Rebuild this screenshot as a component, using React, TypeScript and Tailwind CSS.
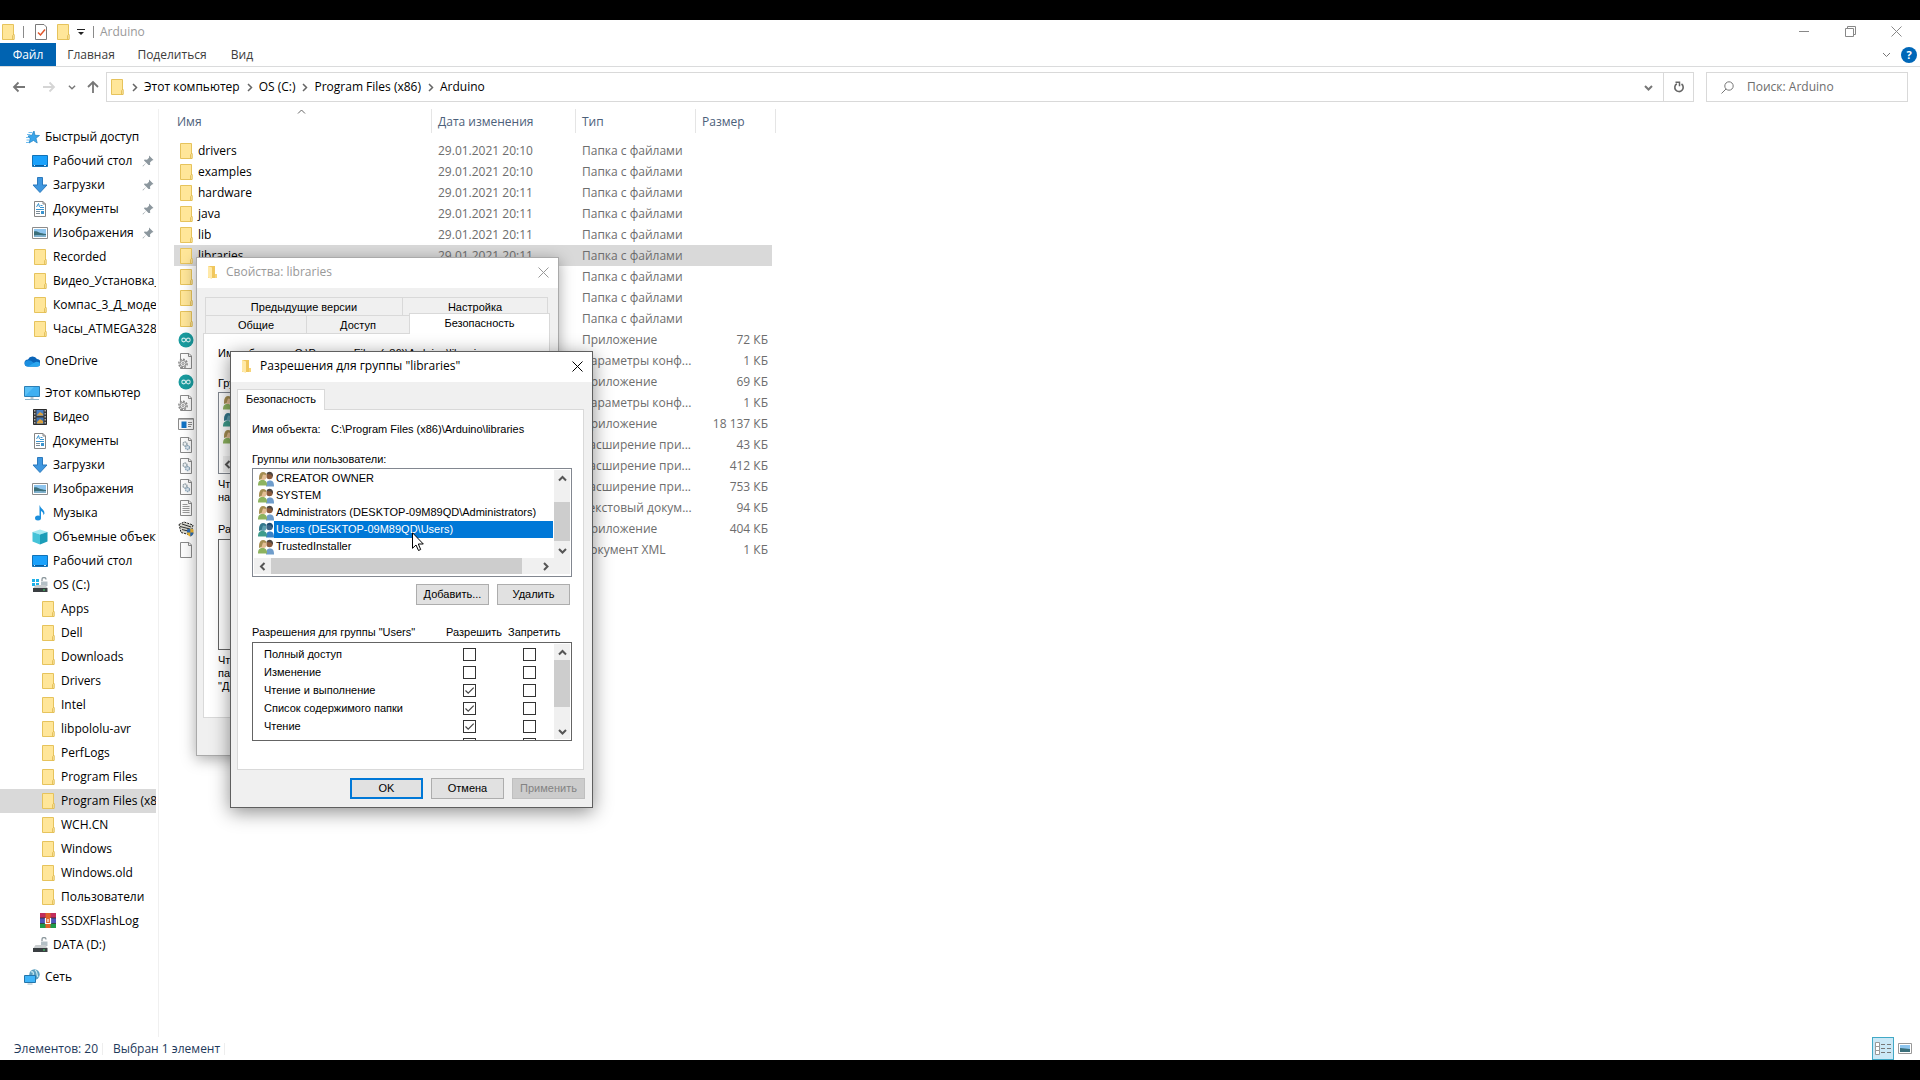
import { useState, type ReactNode } from "react";
import clsx from "clsx";

type IconProps = { className?: string };

const Svg = ({ className, children }: IconProps & { children: ReactNode }) => (
  <svg viewBox="0 0 16 16" className={clsx("size-4 shrink-0", className)} fill="none" aria-hidden="true">
    {children}
  </svg>
);

const FolderIcon = ({ className }: IconProps) => (
  <Svg className={className}>
    <path d="M2.500.5h11v10.500h.5v4.500H2.500z" fill="#ffe699" stroke="#e6c35c" />
    <path d="M12.500 15.500v-4l1.500-1.500v5.500z" fill="#ffefb8" stroke="#e0b94a" strokeWidth=".8" />
  </Svg>
);

const SmallFolderIcon = () => (
  <Svg>
    <path d="M3 2h7v12H3z" fill="#f0c75e" />
    <path d="M3 2l4 1.500V15L3 13.500z" fill="#ffe9a8" />
    <path d="M10 10h2v4h-2z" fill="#f7d57a" />
  </Svg>
);

const StarIcon = () => (
  <Svg>
    <path d="M10 2l1 4.300 4.500.2-3.500 2.700 1.200 4.800L9.500 11.500 5 14l1.200-4.300L4 7l3.800-.7z" fill="#3aa5ea" stroke="#1c7fc0" strokeWidth=".7" />
    <path d="M4.500 3.500h4M3 5.500h3.500M2 8.500h3M2.500 11h3M2 13.500h3" stroke="#6fbdf0" />
  </Svg>
);

const DesktopIcon = () => (
  <Svg>
    <path d="M.5 2.500h15v11H.5z" fill="#1aa1fb" stroke="#1173b8" />
    <path d="M1 12.500h14" stroke="#0a5c9e" />
    <path d="M2 12.500h1M12 12.500h2" stroke="#c8e8ff" />
  </Svg>
);

const DownloadIcon = () => (
  <Svg>
    <path d="M5.500.5h5v7.500h4.500L8 15.500 1 8h4.500z" fill="#3f97df" stroke="#2b79bd" />
  </Svg>
);

const DocumentIcon = () => (
  <Svg>
    <path d="M2.500.5h8.500l2.500 2.500v12.500h-11z" fill="#fff" stroke="#858585" />
    <path d="M11 .5V3h2.500" stroke="#858585" />
    <path d="M4.500 6l2-3.500 1 3.500M8.500 4.500h2M8 6.500h4M4 8.500h8" stroke="#3a94cf" />
    <path d="M4 10.500h4M4 12.500h4" stroke="#7a8a96" />
    <path d="M9 10h3v3H9z" fill="#3a94cf" />
  </Svg>
);

const PictureIcon = () => (
  <Svg>
    <path d="M.5 2.500h15v11H.5z" fill="#fff" stroke="#8c8c8c" />
    <path d="M2 4h12v8H2z" fill="#8ec5ee" />
    <path d="M2 6.500c3-1 5 2 12 2.500v2H2z" fill="#3b6f7a" />
    <path d="M2 10.500c4-1 8 0 12-.5v2H2z" fill="#7fb0cc" />
  </Svg>
);

const CloudIcon = () => (
  <Svg>
    <path d="M4 13.500a3.500 3.500 0 010-7 5 5 0 019-.5 3.500 3.500 0 01-.5 7.500z" fill="#0a64b8" />
    <path d="M4 13.500a3 3 0 01-.5-6c2-.5 4 .5 5 1.500l6 3.500c-.5.700-1.200 1-2 1z" fill="#1a8ee0" />
    <path d="M4 13.500l6.500-4c2-1.300 5.500-.5 5.500 1.500a2.500 2.500 0 01-2.500 2.500z" fill="#2aa7f0" />
  </Svg>
);

const ComputerIcon = () => (
  <Svg>
    <path d="M.5 1.500h15v10H.5z" fill="#5bc1f7" stroke="#2c7fb5" />
    <path d="M1 11l9-9h5v9z" fill="#3fb0f2" />
    <path d="M6.500 12h3v2h-3z" fill="#b7c4cc" />
    <path d="M1 14.500h14" stroke="#8fb4c8" />
  </Svg>
);

const VideoIcon = () => (
  <Svg>
    <path d="M1.500.5h13v15h-13z" fill="#3b3b3b" stroke="#2a2a2a" />
    <path d="M2.800 1v14M13.200 1v14" stroke="#e0e0e0" strokeDasharray="1.500 1.500" />
    <path d="M4.500 1h7v6h-7z" fill="#4a7fc2" />
    <path d="M4.500 8.500h7V15h-7z" fill="#3f74b5" />
    <path d="M5 6l3-3 3 2v1.500H5zM5 13l3-3 3 2v2.500H5z" fill="#dba13d" />
  </Svg>
);

const MusicIcon = () => (
  <Svg>
    <path d="M8 .5c0 3 4.500 3.500 4.500 8l-1 1.500c0-2.500-1.500-3.500-2.500-4v7.500H7.500V.5z" fill="#1b8fdd" />
    <ellipse cx="6" cy="13" rx="3" ry="2.500" fill="#1b8fdd" />
  </Svg>
);

const CubeIcon = () => (
  <Svg>
    <path d="M8 .5l7.500 2.500L8 5.500.5 3z" fill="#a5eaf2" />
    <path d="M.5 3L8 5.500v10L.5 12.500z" fill="#45c3d8" />
    <path d="M15.500 3L8 5.500v10l7.500-3z" fill="#1b9db8" />
  </Svg>
);

const DriveIcon = ({ os }: { os?: boolean }) => (
  <Svg>
    {os && <path d="M0 2h3v3H0zM4 2h3v3H4zM0 6h3v3H0zM4 6h3v3H4z" fill="#1fb1e8" />}
    <path d="M10 4V2.500a2 2 0 014 0" stroke="#8d999e" strokeWidth="1.300" />
    <path d="M9 4.500h6.500V9H9z" fill="#b4c0c6" />
    <path d="M3.500 8h10l2 3H1.500z" fill="#c9cdcf" />
    <path d="M1 11h14.500v4H1z" fill="#3a3f42" />
    <path d="M11 12.500h2v1h-2z" fill="#3fe26a" />
  </Svg>
);

const RarIcon = () => (
  <Svg>
    <path d="M0 0h16v5H0z" fill="#c22d5b" />
    <path d="M0 5h16v5.500H0z" fill="#4c56b8" />
    <path d="M0 10.500h16V15H0z" fill="#1f9a4a" />
    <path d="M0 5h16M0 10.500h16" stroke="#222" strokeWidth=".7" />
    <path d="M5.500 0h5v15h-5z" fill="#e0642c" />
    <path d="M5.500 5v5.500h5V5M8 6v3" stroke="#fff" strokeWidth="1.200" />
  </Svg>
);

const NetworkIcon = () => (
  <Svg>
    <circle cx="10.500" cy="5.500" r="5.200" fill="#5a9fbf" />
    <path d="M7 3c2-1 3 1 2 3M11 1c3 2 1 4 3 7" stroke="#c4e6ee" strokeWidth="1.300" />
    <path d="M.5 6.500h11v7H.5z" fill="#3fb4f8" stroke="#2575aa" />
    <path d="M3.500 15h5" stroke="#9bb4c0" />
  </Svg>
);

const ArduinoIcon = () => (
  <Svg>
    <circle cx="8" cy="8" r="7.500" fill="#1a9c9f" />
    <circle cx="5.700" cy="8" r="1.900" stroke="#d6f0f0" strokeWidth="1.100" />
    <circle cx="10.300" cy="8" r="1.900" stroke="#d6f0f0" strokeWidth="1.100" />
  </Svg>
);

const Sheet = ({ children }: { children?: ReactNode }) => (
  <Svg>
    <path d="M2.500.5h8.500l2.500 2.500v12.500h-11z" fill="#fcfcfc" stroke="#8a8a8a" />
    <path d="M10.500.5v3h3" stroke="#8a8a8a" />
    {children}
  </Svg>
);

const IniIcon = () => (
  <Sheet>
    <circle cx="5" cy="10.500" r="4.200" fill="#f2f2f2" stroke="#8a8a8a" strokeWidth="1.400" strokeDasharray="2 1.200" />
    <circle cx="5" cy="10.500" r="3" stroke="#8a8a8a" />
    <circle cx="5" cy="10.500" r="1" fill="#fff" stroke="#8a8a8a" />
  </Sheet>
);

const DllIcon = () => (
  <Sheet>
    <circle cx="7" cy="7" r="2" fill="#eef2f4" stroke="#93a0a8" strokeWidth="1.300" strokeDasharray="1.500 .5" />
    <circle cx="9.500" cy="10.500" r="2" fill="#dfeaf2" stroke="#8fa9bd" strokeWidth="1.300" strokeDasharray="1.500 .5" />
  </Sheet>
);

const TextIcon = () => (
  <Sheet>
    <path d="M4.500 4.500h5M4.500 6.500h7M4.500 8.500h7M4.500 10.500h7M4.500 12.500h7" stroke="#9a9a9a" />
  </Sheet>
);

const ExeIcon = () => (
  <Svg>
    <path d="M.5 2.500h15v11H.5z" fill="#fafafa" stroke="#8a8a8a" />
    <path d="M1 3.500h14" stroke="#b5b5b5" />
    <path d="M3.500 5.500h5V12h-5z" fill="#1273c4" />
    <path d="M10 6.500h4M10 8.500h4M10 10.500h3" stroke="#8a8a8a" />
  </Svg>
);

const UninstallIcon = () => (
  <Svg>
    <path d="M1 3.500L6 1l9 3-2.500 10L3 11.500z" fill="#d9d9d0" stroke="#222" strokeDasharray="2 1" />
    <path d="M2 5.500l10 2.500M4 3l9 3M4 8.500l6 1.500" stroke="#333" />
    <path d="M9 8.500l3-1 3.500 1v3c0 2-1.500 3.500-3.200 4C10.500 15 9 13.500 9 11.500z" fill="#f0b72f" />
    <path d="M12.300 7.500L9 8.500v3h3.300zM12.300 11.500h3.200c0 2-1.500 3.500-3.200 4z" fill="#2c6cb8" />
  </Svg>
);

const PinIcon = () => (
  <svg viewBox="0 0 12 12" className="size-3 shrink-0" aria-hidden="true">
    <path d="M7 .5L11.500 5l-1.500.5-2 2 .2 2.500L6.500 10 4.300 7.700 1 11.500.5 11l3.800-3.300L2 5.500l.5-1 2.500.2 2-2z" fill="#8c979e" />
  </svg>
);

const UsersIcon = ({ blue }: { blue?: boolean }) => (
  <Svg>
    <path d="M8 15.500c0-4 1-6 4-6s4 2 4 6z" fill={blue ? "#3a83c6" : "#6f9dcb"} />
    <circle cx="11.500" cy="5" r="3.200" fill={blue ? "#3c6384" : "#8a5a3c"} />
    <path d="M8.500 3c1-3 6-3 6.500 1v2l-2-2.500z" fill={blue ? "#1f4c70" : "#4d4540"} />
    <path d="M0 14.500c0-4 1.500-5.500 4.500-5.500S9 10.500 9 14.500z" fill={blue ? "#3f9c8c" : "#8db35f"} />
    <circle cx="5" cy="5.500" r="3.500" fill={blue ? "#5fa0b0" : "#e3bd93"} />
    <path d="M1 9c0-2 0-8 4-8 2.500 0 3.500 1.500 3.500 3L5 3.500 3.500 8z" fill={blue ? "#34788c" : "#a58e52"} />
  </Svg>
);

type Dir = "up" | "down" | "left" | "right";

const chevrons: Record<Dir, string> = {
  up: "M1 6.500L4.500 3 8 6.500",
  down: "M1 3L4.500 6.500 8 3",
  left: "M6.500 1L3 4.500 6.500 8",
  right: "M3 1l3.500 3.500L3 8",
};

const Chevron = ({ dir, className = "size-[9px] text-[#555]", thick = 2 }: IconProps & { dir: Dir; thick?: number }) => (
  <svg viewBox="0 0 9 9" className={clsx("shrink-0", className)} fill="none" aria-hidden="true">
    <path d={chevrons[dir]} stroke="currentColor" strokeWidth={thick} />
  </svg>
);

const CloseIcon = () => (
  <svg viewBox="0 0 11 11" className="size-[11px]" fill="none" aria-hidden="true">
    <path d="M.5.5l10 10M10.500.5l-10 10" stroke="currentColor" />
  </svg>
);

type SideItem = { label: string; icon: ReactNode; level?: 1 | 2 | 3; pin?: boolean; active?: boolean };

const folder = (label: string, level: 2 | 3 = 3, active = false): SideItem => ({
  label,
  level,
  active,
  icon: <FolderIcon />,
});

const sideGroups: SideItem[][] = [
  [
    { label: "Быстрый доступ", icon: <StarIcon />, level: 1 },
    { label: "Рабочий стол", icon: <DesktopIcon />, pin: true },
    { label: "Загрузки", icon: <DownloadIcon />, pin: true },
    { label: "Документы", icon: <DocumentIcon />, pin: true },
    { label: "Изображения", icon: <PictureIcon />, pin: true },
    folder("Recorded", 2),
    folder("Видео_Установка_п", 2),
    folder("Компас_3_Д_модели", 2),
    folder("Часы_ATMEGA328_", 2),
  ],
  [{ label: "OneDrive", icon: <CloudIcon />, level: 1 }],
  [
    { label: "Этот компьютер", icon: <ComputerIcon />, level: 1 },
    { label: "Видео", icon: <VideoIcon /> },
    { label: "Документы", icon: <DocumentIcon /> },
    { label: "Загрузки", icon: <DownloadIcon /> },
    { label: "Изображения", icon: <PictureIcon /> },
    { label: "Музыка", icon: <MusicIcon /> },
    { label: "Объемные объекты", icon: <CubeIcon /> },
    { label: "Рабочий стол", icon: <DesktopIcon /> },
    { label: "OS (C:)", icon: <DriveIcon os /> },
    folder("Apps"),
    folder("Dell"),
    folder("Downloads"),
    folder("Drivers"),
    folder("Intel"),
    folder("libpololu-avr"),
    folder("PerfLogs"),
    folder("Program Files"),
    folder("Program Files (x86)", 3, true),
    folder("WCH.CN"),
    folder("Windows"),
    folder("Windows.old"),
    folder("Пользователи"),
    { label: "SSDXFlashLog", icon: <RarIcon />, level: 3 },
    { label: "DATA (D:)", icon: <DriveIcon /> },
  ],
  [{ label: "Сеть", icon: <NetworkIcon />, level: 1 }],
];

const Sidebar = () => (
  <nav className="flex w-[159px] shrink-0 flex-col gap-2 border-r border-[#f0f0f0] pt-4 pr-0.5">
    {sideGroups.map((group, i) => (
      <ul key={i}>
        {group.map(({ label, icon, level = 2, pin, active }) => (
          <li key={label}>
            <a
              href="#"
              className={clsx(
                "flex h-6 items-center gap-[5px] overflow-hidden whitespace-nowrap",
                level === 1 && "pl-6",
                level === 2 && "pl-8",
                level === 3 && "pl-10",
                active && "bg-[#d9d9d9]"
              )}
            >
              {icon}
              <span className="flex-1">{label}</span>
              {pin && (
                <span className="pr-0.5">
                  <PinIcon />
                </span>
              )}
            </a>
          </li>
        ))}
      </ul>
    ))}
  </nav>
);

type FileRow = { name?: string; date?: string; type: string; size?: string; icon: ReactNode };

const dir = (name?: string, date?: string): FileRow => ({
  name,
  date,
  type: "Папка с файлами",
  icon: <FolderIcon />,
});

const files: FileRow[] = [
  dir("drivers", "29.01.2021 20:10"),
  dir("examples", "29.01.2021 20:10"),
  dir("hardware", "29.01.2021 20:11"),
  dir("java", "29.01.2021 20:11"),
  dir("lib", "29.01.2021 20:11"),
  dir("libraries", "29.01.2021 20:11"),
  dir(),
  dir(),
  dir(),
  { type: "Приложение", size: "72 КБ", icon: <ArduinoIcon /> },
  { type: "Параметры конф...", size: "1 КБ", icon: <IniIcon /> },
  { type: "Приложение", size: "69 КБ", icon: <ArduinoIcon /> },
  { type: "Параметры конф...", size: "1 КБ", icon: <IniIcon /> },
  { type: "Приложение", size: "18 137 КБ", icon: <ExeIcon /> },
  { type: "Расширение при...", size: "43 КБ", icon: <DllIcon /> },
  { type: "Расширение при...", size: "412 КБ", icon: <DllIcon /> },
  { type: "Расширение при...", size: "753 КБ", icon: <DllIcon /> },
  { type: "Текстовый докум...", size: "94 КБ", icon: <TextIcon /> },
  { type: "Приложение", size: "404 КБ", icon: <UninstallIcon /> },
  { type: "Документ XML", size: "1 КБ", icon: <Sheet /> },
];

const headCell = "flex h-6 items-center border-r border-[#e5e5e5] pt-0.5";

const FileTable = () => (
  <div className="flex-1 pl-[15px]">
    <table className="w-[598px] table-fixed border-collapse whitespace-nowrap">
      <thead>
        <tr className="h-[31px] text-left align-top text-[#4c607a]">
          <th className="w-[258px] p-0 font-normal">
            <div className={clsx(headCell, "relative pl-[3px]")}>
              Имя
              <Chevron dir="up" thick={1} className="absolute -top-0.5 left-[123px] size-[9px] text-[#666]" />
            </div>
          </th>
          <th className="w-36 p-0 font-normal">
            <div className={clsx(headCell, "pl-1.5")}>Дата изменения</div>
          </th>
          <th className="w-[120px] p-0 font-normal">
            <div className={clsx(headCell, "pl-1.5")}>Тип</div>
          </th>
          <th className="p-0 font-normal">
            <div className={clsx(headCell, "w-20 pl-1.5")}>Размер</div>
          </th>
        </tr>
      </thead>
      <tbody>
        {files.map(({ name, date, type, size, icon }, i) => (
          <tr key={i} className={clsx("h-[21px] text-[#6d6d6d]", name === "libraries" && "bg-[#d9d9d9]")}>
            <td className="p-0">
              <div className="flex items-center gap-1 pl-1 text-black">
                {icon}
                {name}
              </div>
            </td>
            <td className="p-0 pl-1.5">{date}</td>
            <td className="p-0 pl-1.5">{type}</td>
            <td className="p-0 pr-1 text-right">{size}</td>
          </tr>
        ))}
      </tbody>
    </table>
  </div>
);

const TitleBar = () => (
  <header className="flex h-[23px] items-center">
    <FolderIcon />
    <span className="ml-[7px] h-3 w-px bg-[#8a8a8a]" />
    <button className="ml-[9px]" aria-label="Свойства">
      <Svg>
        <path d="M2.500.5h8.500l2.500 2.500v12.500h-11z" fill="#fff" stroke="#7a7a7a" />
        <path d="M5 8.500l2.500 2.500L12 5.500" stroke="#e0552a" strokeWidth="1.500" />
      </Svg>
    </button>
    <button className="ml-1.5" aria-label="Новая папка">
      <FolderIcon />
    </button>
    <button className="ml-1.5" aria-label="Настройка панели">
      <svg viewBox="0 0 8 8" className="size-2" aria-hidden="true">
        <path d="M0 1h8v1H0zM1 4h6L4 7z" fill="#222" />
      </svg>
    </button>
    <span className="ml-2 h-3 w-px bg-[#8a8a8a]" />
    <h1 className="ml-1.5 text-[#999]">Arduino</h1>
    <div className="ml-auto flex pr-px text-[#888]">
      <button className="grid h-5 w-[46px] place-items-center" aria-label="Свернуть">
        <span className="h-px w-2.5 bg-[#888]" />
      </button>
      <button className="grid h-5 w-[46px] place-items-center" aria-label="Свернуть в окно">
        <svg viewBox="0 0 11 11" className="size-[11px]" fill="none" aria-hidden="true">
          <path d="M.5 2.500h8v8h-8zM2.500 2.500v-2h8v8h-2" stroke="currentColor" />
        </svg>
      </button>
      <button className="grid h-5 w-[46px] place-items-center" aria-label="Закрыть">
        <CloseIcon />
      </button>
    </div>
  </header>
);

const Ribbon = () => (
  <div className="flex h-6 items-center border-b border-[#dadbdc] text-[#3c3c3c]">
    <button className="h-full w-14 bg-[#0063b1] text-white">Файл</button>
    <button className="h-full w-[70px]">Главная</button>
    <button className="h-full w-[92px]">Поделиться</button>
    <button className="h-full w-12">Вид</button>
    <div className="ml-auto flex items-center gap-2.5 pr-[3px]">
      <Chevron dir="down" thick={1} className="size-[9px] text-[#777]" />
      <button className="size-4 rounded-full bg-[#0067b8] text-[11px] leading-4 font-bold text-white" aria-label="Справка">
        ?
      </button>
    </div>
  </div>
);

const crumbs = ["Этот компьютер", "OS (C:)", "Program Files (x86)", "Arduino"];

const AddressBar = () => (
  <div className="flex h-[42px] items-start pt-[5px] pr-3">
    <div className="flex h-[30px] w-[106px] shrink-0 items-center pl-3 text-[#777]">
      <button aria-label="Назад">
        <svg viewBox="0 0 14 12" className="h-3 w-3.5" fill="none" aria-hidden="true">
          <path d="M13 6H2M6.500 1.500L2 6l4.500 4.500" stroke="currentColor" strokeWidth="1.800" />
        </svg>
      </button>
      <button className="ml-4 text-[#d5d5d5]" aria-label="Вперед">
        <svg viewBox="0 0 14 12" className="h-3 w-3.5" fill="none" aria-hidden="true">
          <path d="M1 6h11M7.500 1.500L12 6l-4.500 4.500" stroke="currentColor" strokeWidth="1.800" />
        </svg>
      </button>
      <button className="ml-3" aria-label="Журнал">
        <Chevron dir="down" thick={1.5} className="size-2" />
      </button>
      <button className="ml-2.5" aria-label="Вверх">
        <svg viewBox="0 0 14 14" className="size-3.5" fill="none" aria-hidden="true">
          <path d="M7 13V2M2 7l5-5 5 5" stroke="currentColor" strokeWidth="1.800" />
        </svg>
      </button>
    </div>
    <div className="flex h-[30px] flex-1 items-center border border-[#d9d9d9]">
      <span className="ml-0.5">
        <FolderIcon />
      </span>
      <ol className="flex items-center gap-[5px] pl-[5px]">
        {crumbs.map((c) => (
          <li key={c} className="flex items-center gap-[5px]">
            <Chevron dir="right" thick={1.5} className="size-[9px] text-[#666]" />
            <a href="#">{c}</a>
          </li>
        ))}
      </ol>
      <button className="ml-auto pr-2.5" aria-label="Предыдущие расположения">
        <Chevron dir="down" className="size-[9px] text-[#777]" />
      </button>
      <button className="grid h-full w-[30px] place-items-center border-l border-[#d9d9d9] text-[#666]" aria-label="Обновить">
        <svg viewBox="0 0 12 12" className="size-3" fill="none" aria-hidden="true">
          <path d="M8.500 3A4.200 4.200 0 113.800 2.800" stroke="currentColor" strokeWidth="1.600" />
          <path d="M2.500 1.300h4v4" stroke="currentColor" strokeWidth="1.500" />
        </svg>
      </button>
    </div>
    <label className="ml-3 flex h-[30px] w-[202px] items-center border border-[#d9d9d9] pl-3.5">
      <svg viewBox="0 0 13 13" className="size-[13px]" fill="none" aria-hidden="true">
        <circle cx="8" cy="5" r="4.200" stroke="#777" />
        <path d="M5 8L.5 12.500" stroke="#777" />
      </svg>
      <input
        className="ml-[13px] w-36 outline-none placeholder:text-[#6d6d6d]"
        placeholder="Поиск: Arduino"
        aria-label="Поиск"
      />
    </label>
  </div>
);

const StatusBar = () => (
  <footer className="flex h-[23px] items-center pl-3.5 text-[#1e395b]">
    <span className="w-[88px]">Элементов: 20</span>
    <span className="h-3 w-px bg-[#eee]" />
    <span className="ml-2.5 w-[111px]">Выбран 1 элемент</span>
    <span className="h-3 w-px bg-[#eee]" />
    <button className="ml-auto grid h-full w-[22px] place-items-center border border-[#41a9c6] bg-[#cbe8f6]" aria-label="Таблица">
      <Svg>
        <path d="M.5 1.500h4v4h-4zM.5 5.500h4v4h-4zM.5 9.500h4v4h-4z" fill="#fff" stroke="#999" />
        <path d="M6 3.500h4M12 3.500h4M6 7.500h4M12 7.500h4M6 11.500h4M12 11.500h4" stroke="#777" />
      </Svg>
    </button>
    <button className="mr-2 ml-1" aria-label="Крупные значки">
      <svg viewBox="0 0 14 11" className="h-[11px] w-3.5" fill="none" aria-hidden="true">
        <path d="M.5.5h13v10H.5z" fill="#fff" stroke="#999" />
        <path d="M2 2h10v7H2z" fill="#8ec5ee" />
        <path d="M2 5c4 0 6 1 10 1v3H2z" fill="#3b6f7a" />
      </svg>
    </button>
  </footer>
);

const ScrollBar = ({ thumb }: { thumb: string }) => (
  <div className="flex w-4 shrink-0 flex-col bg-[#f0f0f0]">
    <span className="grid h-4 place-items-center">
      <Chevron dir="up" />
    </span>
    <div className="flex-1">
      <div className={clsx("bg-[#cdcdcd]", thumb)} />
    </div>
    <span className="grid h-4 place-items-center">
      <Chevron dir="down" />
    </span>
  </div>
);

const DialogTitle = ({ title, muted }: { title: string; muted?: boolean }) => (
  <header className={clsx("flex h-[30px] shrink-0 items-center bg-white pr-[9px] pb-0.5 pl-2", muted && "text-[#999]")}>
    <SmallFolderIcon />
    <h2 className="ml-[5px] font-['Open_Sans','Noto_Sans',sans-serif] text-xs">{title}</h2>
    <button className="ml-auto" aria-label="Закрыть">
      <CloseIcon />
    </button>
  </header>
);

const tabClass = "border-t border-l border-[#d9d9d9] bg-[#f0f0f0] pt-px";

const PropertiesDialog = () => (
  <section className="absolute top-[257px] left-[196px] flex h-[499px] w-[363px] flex-col border border-[#aaa] bg-[#f0f0f0] font-['Liberation_Sans',Arial,sans-serif] text-[11px] leading-[13px] shadow-[0_3px_14px_rgba(0,0,0,0.35)]">
    <DialogTitle title="Свойства: libraries" muted />
    <div className="mt-[9px] ml-2 flex h-[18px] w-[343px]">
      <button className={clsx(tabClass, "w-[197px]")}>Предыдущие версии</button>
      <button className={clsx(tabClass, "flex-1 border-r")}>Настройка</button>
    </div>
    <div className="ml-2 flex h-[18px]">
      <button className={clsx(tabClass, "w-[101px]")}>Общие</button>
      <button className={clsx(tabClass, "w-[103px]")}>Доступ</button>
      <button className="relative -mt-0.5 h-[21px] w-[141px] border border-b-0 border-[#d9d9d9] bg-white pb-0.5">
        Безопасность
      </button>
    </div>
    <div className="mr-2 ml-1.5 h-[385px] border border-[#d9d9d9] bg-white pt-[13px] pl-3.5">
      <p className="flex gap-2">
        <span>Имя объекта:</span>
        <span>C:\Program Files (x86)\Arduino\libraries</span>
      </p>
      <p className="mt-[17px]">Группы</p>
      <div className="mt-0.5 flex h-[82px] w-80 flex-col border border-[#828790] pl-1">
        <div className="pt-px">
          {[false, true, false].map((blue, i) => (
            <div key={i} className="flex h-[17px] items-center">
              <UsersIcon blue={blue} />
            </div>
          ))}
        </div>
        <div className="mt-auto mb-px flex h-4 items-center bg-[#f0f0f0]">
          <Chevron dir="left" />
        </div>
      </div>
      <p className="mt-1">Чтобы</p>
      <p>нажать</p>
      <p className="mt-[19px]">Разрешения</p>
      <div className="mt-[3px] h-[111px] w-80 border border-[#646464]" />
      <p className="mt-1">Чтобы</p>
      <p>параметры</p>
      <p>"Дополнительно"</p>
    </div>
  </section>
);

const users = [
  "CREATOR OWNER",
  "SYSTEM",
  "Administrators (DESKTOP-09M89QD\\Administrators)",
  "Users (DESKTOP-09M89QD\\Users)",
  "TrustedInstaller",
];

const permissions = [
  { label: "Полный доступ", allow: false },
  { label: "Изменение", allow: false },
  { label: "Чтение и выполнение", allow: true },
  { label: "Список содержимого папки", allow: true },
  { label: "Чтение", allow: true },
  { label: "", allow: false },
];

const CheckBox = ({ label, checked = false }: { label: string; checked?: boolean }) => {
  const [on, setOn] = useState(checked);
  return (
    <label className="grid size-[13px]">
      <input
        type="checkbox"
        aria-label={label}
        checked={on}
        onChange={() => setOn(!on)}
        className="peer col-start-1 row-start-1 size-[13px] appearance-none border border-[#333] bg-white"
      />
      <svg
        viewBox="0 0 13 13"
        className="pointer-events-none col-start-1 row-start-1 hidden size-[13px] peer-checked:block"
        fill="none"
        aria-hidden="true"
      >
        <path d="M2.500 6.500l2.700 2.700 5.500-5.500" stroke="#444" strokeWidth="1.200" />
      </svg>
    </label>
  );
};

const PushButton = ({ children, primary, disabled }: { children: ReactNode; primary?: boolean; disabled?: boolean }) => (
  <button
    disabled={disabled}
    className={clsx(
      "h-[21px] w-[73px]",
      primary ? "border-2 border-[#0078d7] bg-[#e1e1e1]" : "border",
      !primary && !disabled && "border-[#adadad] bg-[#e1e1e1]",
      disabled && "border-[#bfbfbf] bg-[#cccccc] text-[#838383]"
    )}
  >
    {children}
  </button>
);

const PermissionsDialog = () => {
  const [selected, setSelected] = useState(3);
  return (
    <section className="absolute top-[351px] left-[230px] flex w-[363px] flex-col border border-[#5f5f5f] bg-[#f0f0f0] pb-2 font-['Liberation_Sans',Arial,sans-serif] text-[11px] leading-[13px] shadow-[0_4px_18px_rgba(0,0,0,0.45)]">
      <DialogTitle title='Разрешения для группы "libraries"' />
      <div className="mt-[7px] ml-1.5 flex h-5">
        <button className="relative h-[21px] w-[88px] border border-b-0 border-[#d9d9d9] bg-white pb-0.5">
          Безопасность
        </button>
      </div>
      <div className="mr-2 ml-1.5 h-[361px] border border-[#d9d9d9] bg-white pt-[13px] pl-3.5">
        <p className="flex">
          <span className="w-[79px]">Имя объекта:</span>
          <span>C:\Program Files (x86)\Arduino\libraries</span>
        </p>
        <p className="mt-[17px]">Группы или пользователи:</p>
        <div className="mt-0.5 h-[109px] w-80 border border-[#828790] p-px">
          <div className="flex h-[88px]">
            <ul className="flex-1 pl-1">
              {users.map((u, i) => (
                <li key={u}>
                  <button onClick={() => setSelected(i)} className="flex h-[17px] w-full items-center text-left">
                    <UsersIcon blue={i === selected} />
                    <span
                      className={clsx(
                        "mr-px flex-1 pl-0.5 leading-[17px] whitespace-nowrap",
                        i === selected && "bg-[#0078d7] text-white"
                      )}
                    >
                      {u}
                    </span>
                  </button>
                </li>
              ))}
            </ul>
            <ScrollBar thumb="mt-4 h-[39px]" />
          </div>
          <div className="flex h-4 items-center bg-[#f0f0f0] pr-5">
            <span className="grid w-[17px] place-items-center">
              <Chevron dir="left" />
            </span>
            <div className="h-4 w-[251px] bg-[#cdcdcd]" />
            <span className="ml-auto">
              <Chevron dir="right" />
            </span>
          </div>
        </div>
        <div className="mt-[7px] flex w-[318px] justify-end gap-2">
          <PushButton>Добавить...</PushButton>
          <PushButton>Удалить</PushButton>
        </div>
        <div className="mt-[21px] flex">
          <span className="w-[194px]">Разрешения для группы "Users"</span>
          <span className="w-[62px]">Разрешить</span>
          <span>Запретить</span>
        </div>
        <div className="mt-[3px] flex h-[99px] w-80 overflow-hidden border border-[#646464] p-px">
          <ul className="h-24 flex-1 overflow-hidden pt-px pl-2.5">
            {permissions.map(({ label, allow }) => (
              <li key={label} className="flex h-[18px] items-center">
                <span className="w-[199px]">{label}</span>
                <span className="w-[60px]">
                  <CheckBox label={`Разрешить ${label}`} checked={allow} />
                </span>
                <CheckBox label={`Запретить ${label}`} />
              </li>
            ))}
          </ul>
          <ScrollBar thumb="h-[47px]" />
        </div>
      </div>
      <div className="mt-2 mr-[7px] flex justify-end gap-2">
        <PushButton primary>OK</PushButton>
        <PushButton>Отмена</PushButton>
        <PushButton disabled>Применить</PushButton>
      </div>
    </section>
  );
};

const Cursor = () => (
  <svg viewBox="0 0 12 19" className="pointer-events-none absolute top-[532px] left-[412px] h-[19px] w-3" aria-hidden="true">
    <path d="M.5.800v15.500l3.500-3.300 2.500 5.500 2.200-1L6.300 12h5z" fill="#fff" stroke="#000" />
  </svg>
);

const App = () => {
  return (
    <div className="relative flex min-h-screen flex-col bg-black py-5 font-['Open_Sans','Noto_Sans',sans-serif] text-xs leading-4 text-black">
      <main className="flex flex-1 flex-col bg-white">
        <TitleBar />
        <Ribbon />
        <AddressBar />
        <div className="flex flex-1">
          <Sidebar />
          <FileTable />
        </div>
        <StatusBar />
      </main>
      <PropertiesDialog />
      <PermissionsDialog />
      <Cursor />
    </div>
  );
};

export default App;
